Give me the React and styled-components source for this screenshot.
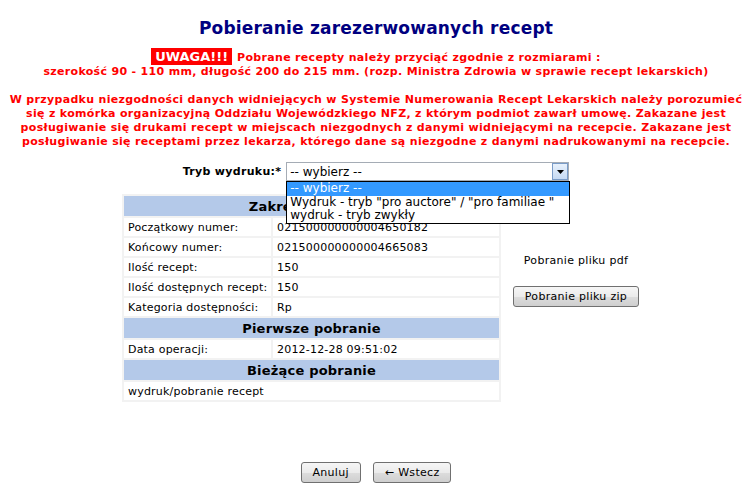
import styled, { createGlobalStyle } from "styled-components"

const GlobalStyle = createGlobalStyle`
    body{
        margin:0;
        background:#ffffff;
        font-family:"DejaVu Sans", Verdana, sans-serif;
        font-size:11px;
        letter-spacing:0.3px;
        color:#000000;
    }
`

const Page = styled.div`
    width:752px;
    padding-top:18px;
`

const Title = styled.h1`
    margin:0;
    text-align:center;
    font-size:17px;
    line-height:20px;
    letter-spacing:0.2px;
    color:#000080;
`

const Warning = styled.p`
    margin:${(p) => p.$top}px 0 0 0;
    text-align:center;
    color:#ff0000;
    font-weight:bold;
    font-size:11px;
    line-height:14px;
    letter-spacing:0.32px;
`

const Badge = styled.span`
    background:#ff0000;
    color:#ffffff;
    font-size:13px;
    letter-spacing:0;
    padding:1px 4px;
    margin-right:5px;
`

const FormRow = styled.div`
    display:flex;
    justify-content:center;
    align-items:center;
    gap:5px;
    margin-top:13px;
`

const Label = styled.span`
    font-weight:bold;
`

const SelectWrap = styled.div`
    position:relative;
    width:283px;
    letter-spacing:0;
`

const SelectBox = styled.div`
    height:19px;
    box-sizing:border-box;
    border:1px solid #a5acb5;
    display:flex;
    align-items:center;
    justify-content:space-between;
    padding-left:3px;
    font-size:12px;
`

const Arrow = styled.span`
    width:16px;
    height:17px;
    box-sizing:border-box;
    border:1px solid #7a9cc8;
    background:linear-gradient(#e8f1fc, #c6daf3);
    display:flex;
    align-items:center;
    justify-content:center;
`

const ListBox = styled.ul`
    position:absolute;
    top:19px;
    left:0;
    right:-1px;
    margin:0;
    padding:0;
    list-style:none;
    background:#ffffff;
    border:1px solid #000000;
    font-size:12px;
    z-index:2;
`

const Option = styled.li`
    padding-left:3px;
    line-height:13.5px;
    background:${(p) => (p.$active ? "#3399ff" : "transparent")};
    color:${(p) => (p.$active ? "#ffffff" : "#000000")};
`

const Main = styled.div`
    display:flex;
    margin-top:13px;
    padding-left:122px;
`

const DataTable = styled.table`
    width:379px;
    background:#f2f2f2;
    border-spacing:2px;
    border-collapse:separate;
    table-layout:fixed;
    letter-spacing:0.2px;
`

const HeadCell = styled.th`
    background:#b4c9e9;
    font-size:13px;
    letter-spacing:0.2px;
    height:20px;
    padding:0;
    text-align:center;
`

const Cell = styled.td`
    background:#ffffff;
    height:18px;
    padding:0 3px 0 4px;
    white-space:nowrap;
    box-sizing:border-box;
`

const Side = styled.div`
    width:150px;
    display:flex;
    flex-direction:column;
    align-items:center;
    padding-top:60px;
    gap:19px;
`

const Button = styled.button`
    font-family:"DejaVu Sans", Verdana, sans-serif;
    font-size:11px;
    letter-spacing:0.3px;
    color:#000000;
    height:21px;
    padding:0 11px;
    border:1px solid #707070;
    border-radius:3px;
    background:linear-gradient(#f6f6f6 0%, #ebebeb 50%, #dddddd 51%, #cfcfcf 100%);
`

const Footer = styled.div`
    display:flex;
    justify-content:center;
    gap:12px;
    margin-top:60px;
`

const rows = [
    ["Początkowy numer:", "021500000000004650182"],
    ["Końcowy numer:", "021500000000004665083"],
    ["Ilość recept:", "150"],
    ["Ilość dostępnych recept:", "150"],
    ["Kategoria dostępności:", "Rp"],
]

const App = () => {
    return (
        <Page>
            <GlobalStyle />
            <Title>Pobieranie zarezerwowanych recept</Title>
            <Warning $top={12}>
                <Badge>UWAGA!!!</Badge>Pobrane recepty należy przyciąć zgodnie z rozmiarami :<br />
                szerokość 90 - 110 mm, długość 200 do 215 mm. (rozp. Ministra Zdrowia w sprawie recept lekarskich)
            </Warning>
            <Warning $top={14}>
                W przypadku niezgodności danych widniejących w Systemie Numerowania Recept Lekarskich należy porozumieć<br />
                się z komórka organizacyjną Oddziału Wojewódzkiego NFZ, z którym podmiot zawarł umowę. Zakazane jest<br />
                posługiwanie się drukami recept w miejscach niezgodnych z danymi widniejącymi na recepcie. Zakazane jest<br />
                posługiwanie się receptami przez lekarza, którego dane są niezgodne z danymi nadrukowanymi na recepcie.
            </Warning>

            <FormRow>
                <Label>Tryb wydruku:*</Label>
                <SelectWrap>
                    <SelectBox>
                        <span>-- wybierz --</span>
                        <Arrow>
                            <svg width="7" height="4" viewBox="0 0 7 4">
                                <path d="M0 0H7L3.5 4Z" fill="#000000" />
                            </svg>
                        </Arrow>
                    </SelectBox>
                    <ListBox>
                        <Option $active>-- wybierz --</Option>
                        <Option>Wydruk - tryb "pro auctore" / "pro familiae "</Option>
                        <Option>wydruk - tryb zwykły</Option>
                    </ListBox>
                </SelectWrap>
            </FormRow>

            <Main>
                <DataTable>
                    <colgroup>
                        <col style={{ width: "147px" }} />
                        <col />
                    </colgroup>
                    <tbody>
                        <tr><HeadCell colSpan={2}>Zakres numerów</HeadCell></tr>
                        {rows.map(([k, v]) => (
                            <tr key={k}>
                                <Cell>{k}</Cell>
                                <Cell>{v}</Cell>
                            </tr>
                        ))}
                        <tr><HeadCell colSpan={2}>Pierwsze pobranie</HeadCell></tr>
                        <tr>
                            <Cell>Data operacji:</Cell>
                            <Cell>2012-12-28 09:51:02</Cell>
                        </tr>
                        <tr><HeadCell colSpan={2}>Bieżące pobranie</HeadCell></tr>
                        <tr><Cell colSpan={2}>wydruk/pobranie recept</Cell></tr>
                    </tbody>
                </DataTable>
                <Side>
                    <span>Pobranie pliku pdf</span>
                    <Button>Pobranie pliku zip</Button>
                </Side>
            </Main>

            <Footer>
                <Button>Anuluj</Button>
                <Button>← Wstecz</Button>
            </Footer>
        </Page>
    )
}

export default App
